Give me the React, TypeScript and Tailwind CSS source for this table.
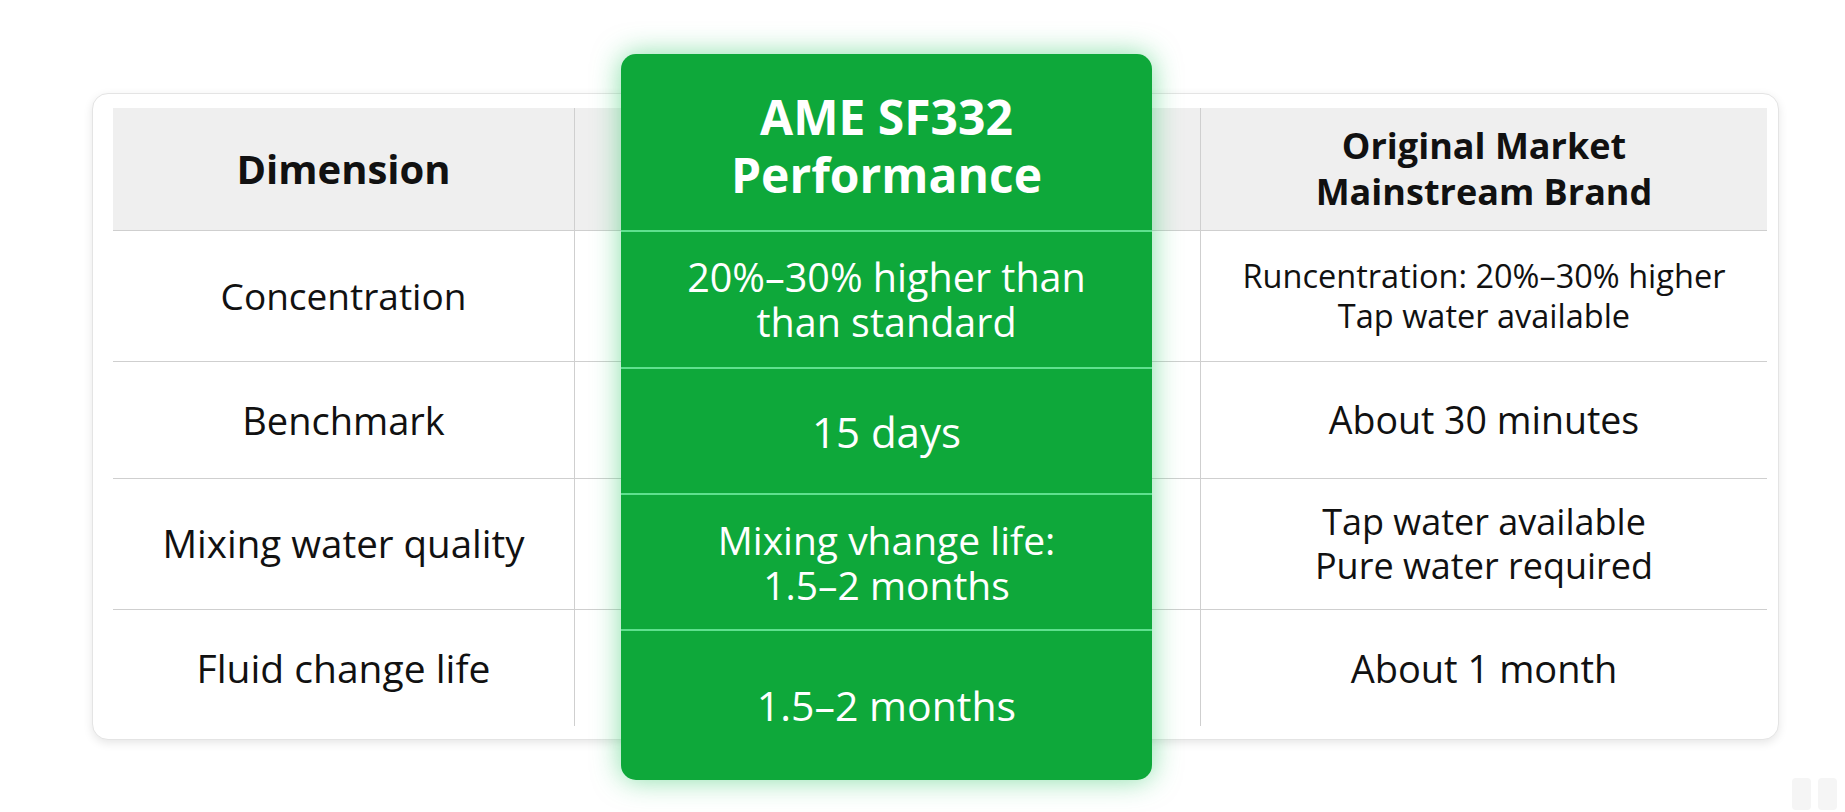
import React from "react";

type Row = {
  dim: string;
  dimSize: string;
  ame: string[];
  ameSize: string;
  brand: string[];
  brandSize: string;
  h: string;
  greenH: string;
};

const ROWS: Row[] = [
  {
    dim: "Concentration",
    dimSize: "text-[37px]",
    ame: ["20%–30% higher than", "than standard"],
    ameSize: "text-[39.5px]",
    brand: ["Runcentration: 20%–30% higher", "Tap water available"],
    brandSize: "text-[32.5px]",
    h: "h-[131px]",
    greenH: "h-[137px]",
  },
  {
    dim: "Benchmark",
    dimSize: "text-[38px]",
    ame: ["15 days"],
    ameSize: "text-[42px]",
    brand: ["About 30 minutes"],
    brandSize: "text-[37.5px]",
    h: "h-[117px]",
    greenH: "h-[126px]",
  },
  {
    dim: "Mixing water quality",
    dimSize: "text-[38.5px]",
    ame: ["Mixing vhange life:", "1.5–2 months"],
    ameSize: "text-[39px]",
    brand: ["Tap water available", "Pure water required"],
    brandSize: "text-[36px]",
    h: "h-[131px]",
    greenH: "h-[136px]",
  },
  {
    dim: "Fluid change life",
    dimSize: "text-[39px]",
    ame: ["1.5–2 months"],
    ameSize: "text-[41px]",
    brand: ["About 1 month"],
    brandSize: "text-[38px]",
    h: "h-[117px]",
    greenH: "h-[151px]",
  },
];

function Lines({ lines }: { lines: string[] }) {
  return (
    <div className="flex flex-col items-center">
      {lines.map((l, i) => (
        <span key={i} className="whitespace-nowrap">
          {l}
        </span>
      ))}
    </div>
  );
}

export default function App() {
  return (
    <div className="relative h-[812px] w-[1845px] overflow-hidden bg-white font-['Open_Sans',sans-serif] text-[#111]">
      {/* table card */}
      <div className="ml-[92px] mt-[93px] w-[1687px] rounded-2xl border border-[#e4e4e4] bg-white pb-[13px] pl-[20px] pr-[13px] pt-[14px] shadow-[0_3px_10px_rgba(0,0,0,0.10)]">
        <div className="grid grid-cols-[462px_626px_566px]">
          {/* header */}
          <div className="flex h-[122px] items-center justify-center border-r border-[#cfcfcf] bg-[#efefef] text-[40px] font-bold">
            Dimension
          </div>
          <div className="h-[122px] border-r border-[#cfcfcf] bg-[#efefef]" />
          <div className="flex h-[122px] items-center justify-center bg-[#efefef] text-center text-[36px] font-bold leading-[46px]">
            <Lines lines={["Original Market", "Mainstream Brand"]} />
          </div>

          {ROWS.map((r) => (
            <React.Fragment key={r.dim}>
              <div className={`flex ${r.h} items-center justify-center border-r border-t border-[#cfcfcf] ${r.dimSize}`}>
                {r.dim}
              </div>
              <div className={`${r.h} border-r border-t border-[#cfcfcf]`} />
              <div className={`flex ${r.h} items-center justify-center border-t border-[#cfcfcf] text-center leading-[1.22] ${r.brandSize}`}>
                <Lines lines={r.brand} />
              </div>
            </React.Fragment>
          ))}
        </div>
      </div>

      {/* highlighted AME column */}
      <div className="absolute left-[621px] top-[54px] flex w-[531px] flex-col overflow-hidden rounded-[15px] bg-[#0ea83a] text-white shadow-[0_0_28px_rgba(34,197,94,0.55)]">
        <div className="flex h-[176px] items-center justify-center pt-[8px] text-center text-[48px] font-bold leading-[58px]">
          <Lines lines={["AME SF332", "Performance"]} />
        </div>
        {ROWS.map((r) => (
          <div
            key={r.dim}
            className={`flex ${r.greenH} items-center justify-center border-t-2 border-[#5fe08e] text-center leading-[45px] ${r.ameSize}`}
          >
            <Lines lines={r.ame} />
          </div>
        ))}
      </div>

      {/* faint corner marks */}
      <div className="absolute left-[1792px] top-[778px] flex gap-[7px]">
        <div className="h-[32px] w-[19px] rounded-sm bg-[#f5f5f5]" />
        <div className="h-[32px] w-[19px] rounded-sm bg-[#f5f5f5]" />
      </div>
    </div>
  );
}
